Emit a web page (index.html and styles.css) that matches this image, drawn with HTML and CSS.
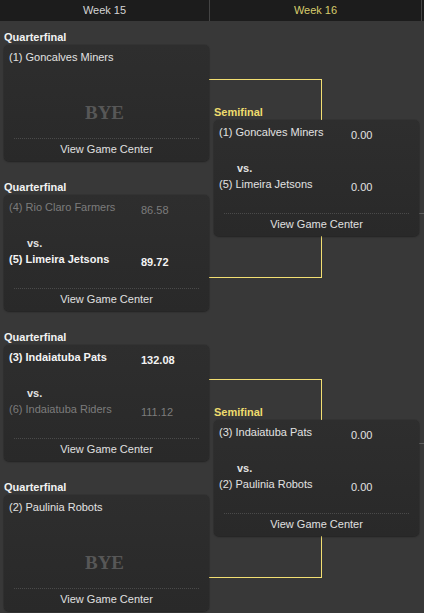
FILE: index.html
```html
<!DOCTYPE html>
<html>
<head>
<meta charset="utf-8">
<link rel="stylesheet" href="styles.css">
</head>
<body>
<div class="weeks">
  <div class="week">Week 15</div>
  <div class="week current">Week 16</div>
  <div class="week-rest"></div>
</div>
<div class="bracket">
  <div class="line h y1"></div>
  <div class="line v v1"></div>
  <div class="line h y2"></div>
  <div class="line h y3"></div>
  <div class="line v v2"></div>
  <div class="line h y4"></div>
  <div class="line g g1"></div>
  <div class="line g g2"></div>

  <div class="col left">
    <div class="block">
      <div class="label">Quarterfinal</div>
      <div class="card">
        <div class="team"><span class="name">(1) Goncalves Miners</span><span class="score"></span></div>
        <div class="bye">BYE</div>
        <div class="footer">View Game Center</div>
      </div>
    </div>
    <div class="block">
      <div class="label">Quarterfinal</div>
      <div class="card">
        <div class="team loser"><span class="name">(4) Rio Claro Farmers</span><span class="score">86.58</span></div>
        <div class="vs">vs.</div>
        <div class="team winner"><span class="name">(5) Limeira Jetsons</span><span class="score">89.72</span></div>
        <div class="footer">View Game Center</div>
      </div>
    </div>
    <div class="block">
      <div class="label">Quarterfinal</div>
      <div class="card">
        <div class="team winner"><span class="name">(3) Indaiatuba Pats</span><span class="score">132.08</span></div>
        <div class="vs">vs.</div>
        <div class="team loser"><span class="name">(6) Indaiatuba Riders</span><span class="score">111.12</span></div>
        <div class="footer">View Game Center</div>
      </div>
    </div>
    <div class="block">
      <div class="label">Quarterfinal</div>
      <div class="card">
        <div class="team"><span class="name">(2) Paulinia Robots</span><span class="score"></span></div>
        <div class="bye">BYE</div>
        <div class="footer">View Game Center</div>
      </div>
    </div>
  </div>

  <div class="col right">
    <div class="block semi first">
      <div class="label">Semifinal</div>
      <div class="card">
        <div class="team"><span class="name">(1) Goncalves Miners</span><span class="score">0.00</span></div>
        <div class="vs">vs.</div>
        <div class="team"><span class="name">(5) Limeira Jetsons</span><span class="score">0.00</span></div>
        <div class="footer">View Game Center</div>
      </div>
    </div>
    <div class="block semi second">
      <div class="label">Semifinal</div>
      <div class="card">
        <div class="team"><span class="name">(3) Indaiatuba Pats</span><span class="score">0.00</span></div>
        <div class="vs">vs.</div>
        <div class="team"><span class="name">(2) Paulinia Robots</span><span class="score">0.00</span></div>
        <div class="footer">View Game Center</div>
      </div>
    </div>
  </div>
</div>
</body>
</html>
```
FILE: styles.css
```css
html, body {
  margin: 0;
  padding: 0;
  background: #383838;
  overflow: hidden;
  height: 613px;
}
body {
  font-family: "Liberation Sans", Arial, sans-serif;
  font-size: 11px;
  color: #e2e2e2;
}
.weeks {
  display: flex;
  height: 21px;
  background: #1c1c1c;
}
.week {
  width: 209px;
  line-height: 21px;
  text-align: center;
  color: #d4d4d4;
  border-right: 1px solid #444;
}
.week.current {
  width: 211px;
  color: #d8cc6c;
}
.week-rest {
  flex: 1;
}
.bracket {
  position: relative;
  display: flex;
  padding-top: 9px;
}
.col {
  position: relative;
  z-index: 1;
  display: flex;
  flex-direction: column;
}
.left {
  width: 206px;
  padding-left: 4px;
  gap: 19px;
}
.right {
  width: 205px;
  padding-left: 4px;
}
.semi.first {
  margin-top: 75px;
}
.semi.second {
  margin-top: 169px;
}
.label {
  font-weight: bold;
  line-height: 14px;
  margin-bottom: 1px;
  color: #f2f2f2;
}
.semi .label {
  color: #eedc6e;
}
.card {
  width: 205px;
  height: 116px;
  box-sizing: border-box;
  padding: 5px 0;
  background: linear-gradient(#2e2e2e, #292929);
  border-radius: 5px;
  box-shadow: 0 0 1px rgba(0,0,0,0.6), 0 1px 2px rgba(0,0,0,0.35);
  display: flex;
  flex-direction: column;
}
.team {
  display: grid;
  grid-template-columns: 132px 1fr;
  padding-left: 5px;
  line-height: 14px;
  height: 17px;
}
.team .score {
  padding-top: 3px;
}
.team.winner {
  font-weight: bold;
  color: #f4f4f4;
}
.team.loser {
  color: #7c7c7c;
}
.vs {
  font-weight: bold;
  line-height: 14px;
  padding-left: 23px;
  margin-top: 19px;
  margin-bottom: 2px;
}
.bye {
  font-family: "Liberation Serif", "Times New Roman", serif;
  font-weight: bold;
  font-size: 19px;
  line-height: 22px;
  color: #575757;
  text-align: center;
  margin-top: 35px;
  padding-right: 4px;
}
.footer {
  margin: auto 10px 0;
  border-top: 1px dotted #4a4a4a;
  padding-top: 3px;
  line-height: 14px;
  text-align: center;
  color: #e0e0e0;
}
.line {
  position: absolute;
  z-index: 0;
  background: #f3df72;
}
.line.h {
  left: 209px;
  width: 113px;
  height: 1px;
}
.line.v {
  left: 321px;
  width: 1px;
}
.y1 { top: 58px; }
.y2 { top: 256px; }
.y3 { top: 358px; }
.y4 { top: 556px; }
.v1 { top: 58px; height: 199px; }
.v2 { top: 358px; height: 199px; }
.line.g {
  background: #5e5e5e;
  left: 412px;
  width: 12px;
  height: 1px;
}
.g1 { top: 192px; }
.g2 { top: 422px; }
```
